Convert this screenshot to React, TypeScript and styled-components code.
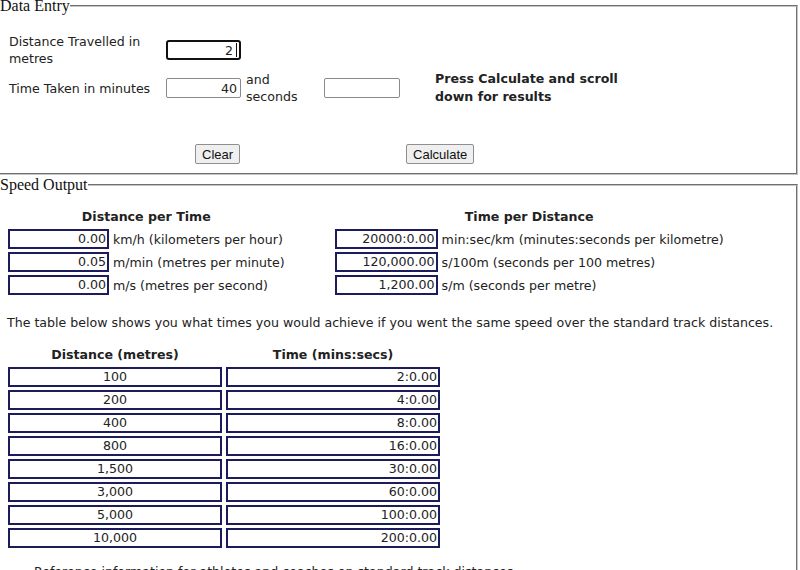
import React from 'react';
import styled, { createGlobalStyle } from 'styled-components';

const GlobalStyle = createGlobalStyle`
  html, body {
    margin: 0;
    padding: 0;
    background: #ffffff;
    overflow: hidden;
  }
  body {
    font-family: "DejaVu Sans", Verdana, sans-serif;
    font-size: 12.6px;
    color: #222;
  }
`;

// Styled
const Page = styled.div`
  width: 800px;
  height: 573px;
  margin-top: -3px;
  overflow: hidden;
`;

const Fieldset = styled.fieldset<{ gapTop?: number }>`
  margin: ${p => p.gapTop ?? 0}px 2px 0 0;
  padding: 0;
  border: 2px groove #c4c4c4;
  border-left: none;
  min-width: 0;
`;

const Legend = styled.legend`
  padding: 0;
  margin: 0;
  font-family: "Liberation Serif", "Times New Roman", serif;
  font-size: 16px;
  line-height: 18px;
  color: #111;
`;

const EntryGrid = styled.div`
  display: grid;
  grid-template-columns: 157px 80px 78px 111px 1fr;
  row-gap: 3px;
  align-items: center;
  padding: 18px 0 0 9px;
`;

const Label = styled.div<{ width?: number }>`
  line-height: 17px;
  width: ${p => p.width ?? 140}px;
`;

const Hint = styled.div`
  font-weight: bold;
  line-height: 18px;
`;

const TextInput = styled.input<{ focused?: boolean; w?: number }>`
  box-sizing: border-box;
  width: ${p => p.w ?? 75}px;
  height: 20px;
  font-family: "DejaVu Sans", Verdana, sans-serif;
  font-size: 12.6px;
  text-align: right;
  padding: 0 ${p => (p.focused ? 6 : 3)}px 0 3px;
  border: ${p => (p.focused ? '2px solid #111' : '1px solid #8a8a8a')};
  border-radius: ${p => (p.focused ? '3px' : '2px')};
  outline: none;
  background: #fff;
  color: #222;
`;

const Caret = styled.span`
  position: absolute;
  right: 4px;
  top: 3px;
  width: 1px;
  height: 14px;
  background: #111;
`;

const FocusWrap = styled.div`
  position: relative;
  width: 75px;
`;

const ButtonRow = styled.div`
  display: flex;
  gap: 166px;
  padding: 38px 0 9px 195px;
`;

const Button = styled.button`
  height: 20px;
  padding: 0 6px;
  font-family: "Liberation Sans", Arial, sans-serif;
  font-size: 13px;
  color: #111;
  background: #efefef;
  border: 1px solid #8f8f8f;
  border-radius: 2px;
`;

const OutputArea = styled.div`
  padding: 14px 0 0 8px;
`;

const Columns = styled.div`
  display: flex;
  gap: 50px;
`;

const Group = styled.div`
  display: flex;
  flex-direction: column;
  gap: 3px;
`;

const GroupHeading = styled.div`
  font-weight: bold;
  text-align: center;
  line-height: 18px;
`;

const OutRow = styled.div`
  display: flex;
  align-items: center;
  gap: 4px;
`;

const OutBox = styled.div<{ w: number; align?: string }>`
  box-sizing: border-box;
  width: ${p => p.w}px;
  height: 20px;
  line-height: 16px;
  border: 2px solid #1c1c5c;
  padding: 0 1px;
  text-align: ${p => p.align ?? 'right'};
  background: #fff;
`;

const Para = styled.p`
  margin: 19px 0 0 -1px;
  line-height: 18px;
`;

const Table = styled.div`
  display: grid;
  grid-template-columns: 214px 214px;
  column-gap: 4px;
  row-gap: 3px;
  margin-top: 14px;
`;

const TableHead = styled.div`
  font-weight: bold;
  text-align: center;
  line-height: 18px;
`;

const Footer = styled.p`
  margin: 15px 0 0 26px;
  line-height: 18px;
`;

const perTime = [
  { v: '0.00', l: 'km/h (kilometers per hour)' },
  { v: '0.05', l: 'm/min (metres per minute)' },
  { v: '0.00', l: 'm/s (metres per second)' },
];

const perDistance = [
  { v: '20000:0.00', l: 'min:sec/km (minutes:seconds per kilometre)' },
  { v: '120,000.00', l: 's/100m (seconds per 100 metres)' },
  { v: '1,200.00', l: 's/m (seconds per metre)' },
];

const track = [
  ['100', '2:0.00'],
  ['200', '4:0.00'],
  ['400', '8:0.00'],
  ['800', '16:0.00'],
  ['1,500', '30:0.00'],
  ['3,000', '60:0.00'],
  ['5,000', '100:0.00'],
  ['10,000', '200:0.00'],
];

const App: React.FC = () => {
  return (
    <Page>
      <GlobalStyle />
      <Fieldset>
        <Legend>Data Entry</Legend>
        <EntryGrid>
          <Label>Distance Travelled in metres</Label>
          <FocusWrap>
            <TextInput focused defaultValue="2" />
            <Caret />
          </FocusWrap>
          <div />
          <div />
          <div />

          <Label width={150}>Time Taken in minutes</Label>
          <TextInput defaultValue="40" />
          <Label width={70}>and seconds</Label>
          <TextInput defaultValue="" w={76} />
          <Hint>
            Press Calculate and scroll
            <br />
            down for results
          </Hint>
        </EntryGrid>
        <ButtonRow>
          <Button>Clear</Button>
          <Button>Calculate</Button>
        </ButtonRow>
      </Fieldset>

      <Fieldset gapTop={1}>
        <Legend>Speed Output</Legend>
        <OutputArea>
          <Columns>
            <Group>
              <GroupHeading>Distance per Time</GroupHeading>
              {perTime.map(r => (
                <OutRow key={r.l}>
                  <OutBox w={101}>{r.v}</OutBox>
                  <span>{r.l}</span>
                </OutRow>
              ))}
            </Group>
            <Group>
              <GroupHeading>Time per Distance</GroupHeading>
              {perDistance.map(r => (
                <OutRow key={r.l}>
                  <OutBox w={103}>{r.v}</OutBox>
                  <span>{r.l}</span>
                </OutRow>
              ))}
            </Group>
          </Columns>

          <Para>
            The table below shows you what times you would achieve if you went the same speed over the standard
            track distances.
          </Para>

          <Table>
            <TableHead>Distance (metres)</TableHead>
            <TableHead>Time (mins:secs)</TableHead>
            {track.map(([d, t]) => (
              <React.Fragment key={d}>
                <OutBox w={214} align="center">{d}</OutBox>
                <OutBox w={214}>{t}</OutBox>
              </React.Fragment>
            ))}
          </Table>

          <Footer>Reference information for athletes and coaches on standard track distances.</Footer>
        </OutputArea>
      </Fieldset>
    </Page>
  );
};

export default App;
